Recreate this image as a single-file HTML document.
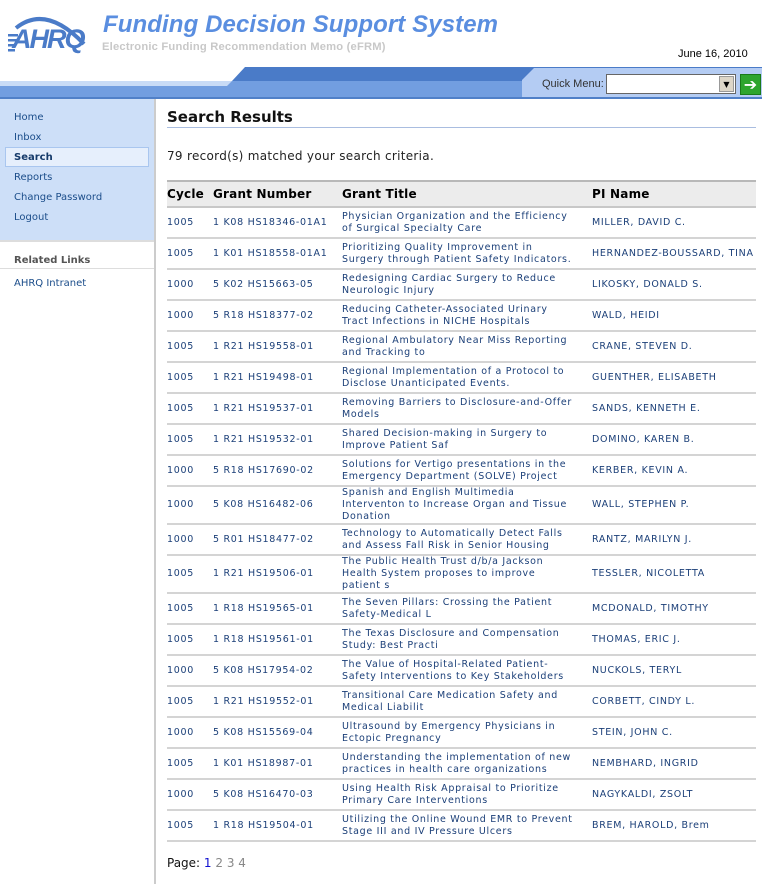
<!DOCTYPE html>
<html><head><style>
*{margin:0;padding:0;box-sizing:border-box}
body{width:762px;height:884px;overflow:hidden;background:#fff;font-family:"DejaVu Sans","Liberation Sans",sans-serif;position:relative}
.abs{position:absolute}
.title{left:103px;top:11px;font:italic bold 24px "Liberation Sans",sans-serif;color:#5a8ee0;letter-spacing:0.1px;white-space:nowrap}
.sub{left:102px;top:41px;font:bold 11.2px "Liberation Sans",sans-serif;color:#c8c8c8;letter-spacing:0.2px;white-space:nowrap}
.date{left:678px;top:48px;font:11px "Liberation Sans",sans-serif;color:#000}
.side{left:0;top:99px;width:154px;height:141px;background:#cddff8}
.vline{left:154px;top:99px;width:2px;height:785px;background:#ccc}
.nav{left:14px;font-size:10px;color:#1b4d8a}
.sel{left:5px;top:147px;width:144px;height:20px;background:#e6effc;border:1px solid #a9c6ef}
table{position:absolute;left:167px;top:180px;width:589px;border-collapse:collapse;font-size:9.5px;letter-spacing:0.7px;color:#1b3f78}
th{background:#ececec;border-top:2px solid #b8b8b8;border-bottom:2px solid #c8c8c8;text-align:left;font-size:12px;letter-spacing:0.2px;color:#000;height:26px;padding:0}
td{border-bottom:2px solid #d4d4d4;height:31px;padding:0;line-height:12px;vertical-align:middle}
</style></head><body>
<svg class="abs" style="left:6px;top:8px" width="90" height="52" viewBox="0 0 90 52">
<path d="M10 20 Q40 -4 78 36" stroke="#4a7bc8" stroke-width="4" fill="none"/>
<g fill="#4a7bc8"><rect x="2" y="26" width="10" height="2.5"/><rect x="2" y="31" width="9" height="2.5"/><rect x="2" y="36" width="8" height="2.5"/><rect x="2" y="41" width="7" height="2.5"/></g>
</svg>
<div class="abs" style="left:12px;top:24px;font:italic bold 27px 'Liberation Sans',sans-serif;color:#4a7bc8;letter-spacing:-2px">AHRQ</div>
<div class="abs title">Funding Decision Support System</div>
<div class="abs sub">Electronic Funding Recommendation Memo (eFRM)</div>
<div class="abs date">June 16, 2010</div>
<svg class="abs" style="left:0;top:67px" width="762" height="32"><polygon points="245,0 762,0 762,14 232,14" fill="#4a7bc8"/><rect x="0" y="14" width="232" height="6" fill="#c8dbf6"/><polygon points="232,14 762,14 762,20 226,20" fill="#729ee0"/><rect x="0" y="19" width="762" height="12" fill="#729ee0"/><rect x="0" y="30" width="762" height="2" fill="#5080c8"/><polygon points="534,1 762,1 762,30 522,30 522,13" fill="#b4ccf3"/></svg>
<div class="abs" style="left:542px;top:78px;font:11px 'Liberation Sans',sans-serif;color:#333">Quick Menu:</div>
<div class="abs" style="left:606px;top:74px;width:130px;height:20px;border:1px solid #666;background:#fff"></div>
<div class="abs" style="left:719px;top:76px;width:15px;height:16px;background:#ddd6c8;border:1px solid #999;font-size:8px;text-align:center;line-height:15px">▼</div>
<div class="abs" style="left:740px;top:74px;width:21px;height:21px;background:#2ea52e;border:1px solid #1a7a1a;color:#fff;font-weight:bold;font-size:16px;text-align:center;line-height:19px">➔</div>
<div class="abs side"></div>
<div class="abs vline"></div>
<div class="abs sel"></div>
<div class="abs nav" style="top:112px">Home</div>
<div class="abs nav" style="top:132px">Inbox</div>
<div class="abs nav" style="top:152px;font-weight:bold;color:#153a6a">Search</div>
<div class="abs nav" style="top:172px">Reports</div>
<div class="abs nav" style="top:192px">Change Password</div>
<div class="abs nav" style="top:212px">Logout</div>
<div class="abs" style="left:0;top:240px;width:154px;height:2px;background:#ddd"></div>
<div class="abs nav" style="top:255px;font-weight:bold;color:#555">Related Links</div>
<div class="abs" style="left:0;top:268px;width:154px;height:1px;background:#ddd"></div>
<div class="abs nav" style="top:278px">AHRQ Intranet</div>
<div class="abs" style="left:167px;top:108px;font-size:15px;font-weight:bold;color:#111">Search Results</div>
<div class="abs" style="left:167px;top:127px;width:589px;height:1px;background:#a9bde0"></div>
<div class="abs" style="left:167px;top:149px;font-size:12px;letter-spacing:0.3px;color:#222">79 record(s) matched your search criteria.</div>
<table>
<tr><th style="width:46px">Cycle</th><th style="width:129px">Grant Number</th><th style="width:250px">Grant Title</th><th>PI Name</th></tr>
<tr><td>1005</td><td>1 K08 HS18346-01A1</td><td>Physician Organization and the Efficiency<br>of Surgical Specialty Care</td><td>MILLER, DAVID C.</td></tr>
<tr><td>1005</td><td>1 K01 HS18558-01A1</td><td>Prioritizing Quality Improvement in<br>Surgery through Patient Safety Indicators.</td><td style="white-space:nowrap">HERNANDEZ-BOUSSARD, TINA</td></tr>
<tr><td>1000</td><td>5 K02 HS15663-05</td><td>Redesigning Cardiac Surgery to Reduce<br>Neurologic Injury</td><td>LIKOSKY, DONALD S.</td></tr>
<tr><td>1000</td><td>5 R18 HS18377-02</td><td>Reducing Catheter-Associated Urinary<br>Tract Infections in NICHE Hospitals</td><td>WALD, HEIDI</td></tr>
<tr><td>1005</td><td>1 R21 HS19558-01</td><td>Regional Ambulatory Near Miss Reporting<br>and Tracking to</td><td>CRANE, STEVEN D.</td></tr>
<tr><td>1005</td><td>1 R21 HS19498-01</td><td>Regional Implementation of a Protocol to<br>Disclose Unanticipated Events.</td><td>GUENTHER, ELISABETH</td></tr>
<tr><td>1005</td><td>1 R21 HS19537-01</td><td>Removing Barriers to Disclosure-and-Offer<br>Models</td><td>SANDS, KENNETH E.</td></tr>
<tr><td>1005</td><td>1 R21 HS19532-01</td><td>Shared Decision-making in Surgery to<br>Improve Patient Saf</td><td>DOMINO, KAREN B.</td></tr>
<tr><td>1000</td><td>5 R18 HS17690-02</td><td>Solutions for Vertigo presentations in the<br>Emergency Department (SOLVE) Project</td><td>KERBER, KEVIN A.</td></tr>
<tr><td style="height:36px">1000</td><td>5 K08 HS16482-06</td><td>Spanish and English Multimedia<br>Interventon to Increase Organ and Tissue<br>Donation</td><td>WALL, STEPHEN P.</td></tr>
<tr><td>1000</td><td>5 R01 HS18477-02</td><td>Technology to Automatically Detect Falls<br>and Assess Fall Risk in Senior Housing</td><td>RANTZ, MARILYN J.</td></tr>
<tr><td style="height:36px">1005</td><td>1 R21 HS19506-01</td><td>The Public Health Trust d/b/a Jackson<br>Health System proposes to improve<br>patient s</td><td>TESSLER, NICOLETTA</td></tr>
<tr><td>1005</td><td>1 R18 HS19565-01</td><td>The Seven Pillars: Crossing the Patient<br>Safety-Medical L</td><td>MCDONALD, TIMOTHY</td></tr>
<tr><td>1005</td><td>1 R18 HS19561-01</td><td>The Texas Disclosure and Compensation<br>Study: Best Practi</td><td>THOMAS, ERIC J.</td></tr>
<tr><td>1000</td><td>5 K08 HS17954-02</td><td>The Value of Hospital-Related Patient-<br>Safety Interventions to Key Stakeholders</td><td>NUCKOLS, TERYL</td></tr>
<tr><td>1005</td><td>1 R21 HS19552-01</td><td>Transitional Care Medication Safety and<br>Medical Liabilit</td><td>CORBETT, CINDY L.</td></tr>
<tr><td>1000</td><td>5 K08 HS15569-04</td><td>Ultrasound by Emergency Physicians in<br>Ectopic Pregnancy</td><td>STEIN, JOHN C.</td></tr>
<tr><td>1005</td><td>1 K01 HS18987-01</td><td>Understanding the implementation of new<br>practices in health care organizations</td><td>NEMBHARD, INGRID</td></tr>
<tr><td>1000</td><td>5 K08 HS16470-03</td><td>Using Health Risk Appraisal to Prioritize<br>Primary Care Interventions</td><td>NAGYKALDI, ZSOLT</td></tr>
<tr><td>1005</td><td>1 R18 HS19504-01</td><td>Utilizing the Online Wound EMR to Prevent<br>Stage III and IV Pressure Ulcers</td><td>BREM, HAROLD, Brem</td></tr>
</table>
<div class="abs" style="left:167px;top:856px;font-size:12px;color:#111">Page: <span style="color:#1010d0">1</span> <span style="color:#888">2 3 4</span></div>
</body></html>
